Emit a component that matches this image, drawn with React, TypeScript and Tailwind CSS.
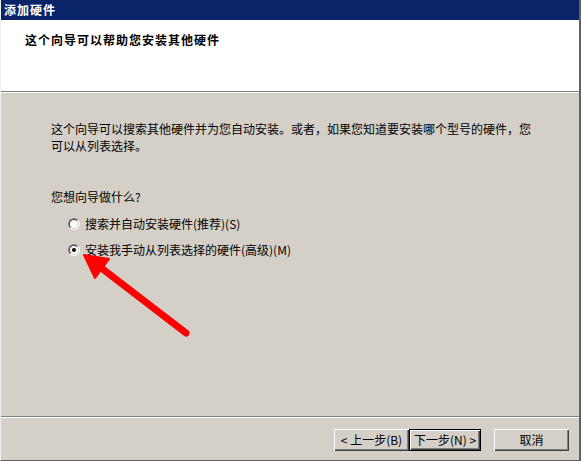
import React from 'react';

const Radio = ({ checked }: { checked?: boolean }) => (
  <span className="relative flex h-[12px] w-[12px] items-center justify-center rounded-full border border-t-[#808080] border-l-[#808080] border-b-white border-r-white">
    <span className="flex h-[10px] w-[10px] items-center justify-center rounded-full border border-t-[#404040] border-l-[#404040] border-b-[#d4d0c8] border-r-[#d4d0c8] bg-white">
      {checked && <span className="h-[4px] w-[4px] rounded-full bg-black" />}
    </span>
  </span>
);

const ClassicButton = ({ children, isDefault, width }: { children: React.ReactNode; isDefault?: boolean; width: string }) => (
  <button
    className={`${width} h-[22px] bg-[#d4d0c8] text-[12px] leading-none text-black ${
      isDefault
        ? 'border border-black shadow-[inset_1px_1px_0_#fff,inset_-1px_-1px_0_#404040,inset_-2px_-2px_0_#808080]'
        : 'shadow-[inset_1px_1px_0_#fff,inset_-1px_-1px_0_#404040,inset_-2px_-2px_0_#808080]'
    }`}
  >
    {children}
  </button>
);

const App = () => {
  return (
    <div className="relative flex h-[461px] w-[581px] flex-col border-l border-l-[#f0f0f0] border-r-2 border-r-[#606060] border-b border-b-[#606060] bg-[#d4d0c8] font-['SimSun','Noto_Sans_CJK_SC',sans-serif] text-black">
      <div className="flex h-[20px] items-center bg-[#0a246a] pl-[3px] text-[12px] font-bold tracking-[1px] text-white">
        添加硬件
      </div>

      <div className="h-[71px] bg-white pl-[24px] pt-[11px]">
        <p className="text-[12px] leading-[17px] font-bold tracking-[1px]">这个向导可以帮助您安装其他硬件</p>
      </div>
      <div className="h-px bg-[#808080]" />
      <div className="h-px bg-white" />

      <div className="flex-1 pl-[50px] pt-[27px] text-[12px] leading-[17px]">
        <p>
          这个向导可以搜索其他硬件并为您自动安装。或者，如果您知道要安装哪个型号的硬件，您
          <br />
          可以从列表选择。
        </p>

        <p className="mt-[34px]">您想向导做什么?</p>

        <div className="mt-[10px] flex flex-col gap-[9px] pl-[17px]">
          <label className="flex items-center gap-[5px]">
            <Radio />
            <span>搜索并自动安装硬件(推荐)(S)</span>
          </label>
          <label className="flex items-center gap-[5px]">
            <Radio checked />
            <span>安装我手动从列表选择的硬件(高级)(M)</span>
          </label>
        </div>
      </div>

      <div className="h-px bg-[#808080]" />
      <div className="h-px bg-white" />
      <div className="flex h-[42px] items-start justify-end pr-[10px] pt-[11px]">
        <ClassicButton width="w-[75px]">&lt; 上一步(B)</ClassicButton>
        <ClassicButton width="w-[72px]" isDefault>
          下一步(N) &gt;
        </ClassicButton>
        <div className="w-[13px]" />
        <ClassicButton width="w-[75px]">取消</ClassicButton>
      </div>

      {/* red annotation arrow */}
      <svg className="pointer-events-none absolute left-[-1px] top-0" width="581" height="461" viewBox="0 0 581 461">
        <line x1="186" y1="333" x2="100" y2="267" stroke="#ff0000" strokeWidth="7" strokeLinecap="round" />
        <polygon points="84,255 109,259 95,278" fill="#ff0000" stroke="#ff0000" strokeWidth="2" strokeLinejoin="round" />
      </svg>
    </div>
  );
};

export default App;
